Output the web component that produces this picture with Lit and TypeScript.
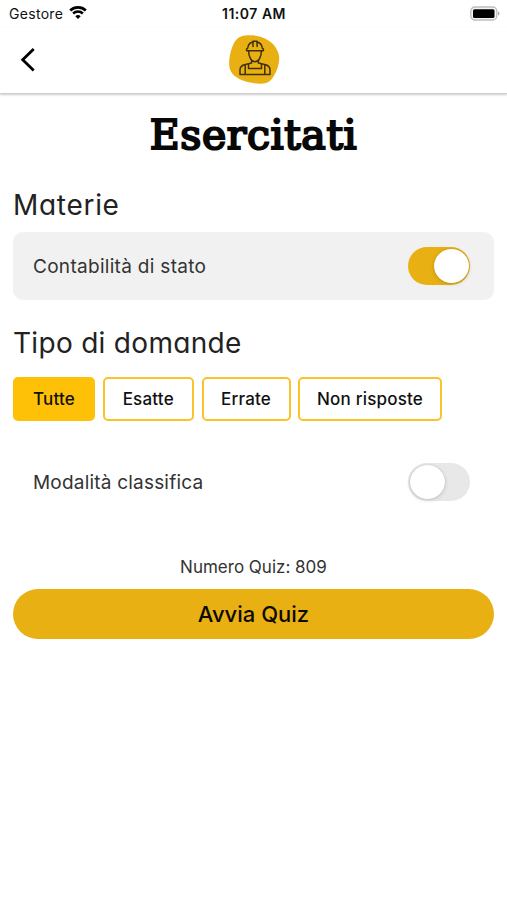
import { LitElement, html, css, svg } from "lit";
import { customElement, property, state } from "lit/decorators.js";
import { classMap } from "lit/directives/class-map.js";

@customElement("quiz-switch")
class QuizSwitch extends LitElement {
  @property({ type: Boolean }) on = false;

  static styles = css`
    :host { display: block; }
    .track {
      display: flex; box-sizing: border-box; width: 62px; height: 38px; padding: 2px 1.500px;
      border-radius: 19px; background: #e8e8e8; justify-content: flex-start;
    }
    .track.on { background: #e9b013; justify-content: flex-end; }
    .knob {
      width: 35px; height: 34px; border-radius: 50%; background: #fff;
      box-shadow: 0 1px 4px rgba(0, 0, 0, 0.16), 0 0 1px rgba(0, 0, 0, 0.2);
    }
  `;

  render() {
    return html`<div class=${classMap({ track: true, on: this.on })} role="switch" aria-checked=${this.on}>
      <div class="knob"></div>
    </div>`;
  }
}

const wifi = svg`
  <path d="M1.200 5.400a11.300 11.300 0 0 1 15.600 0" stroke-width="2.700"/>
  <path d="M4.100 8.500a7.100 7.100 0 0 1 9.800 0" stroke-width="2.500"/>
  <path d="M6.300 11.200a4 4 0 0 1 5.400 0L9 14z" fill="#000" stroke="none"/>`;

const worker = svg`
  <path d="M17 .6C24-.4 31 .6 37 3.500C44 7 49.500 12.500 51 20.500C52 28 49.500 35 45.500 41.500C42.500 46.500 39 48.700 33 48.700C24 48.700 14 46.300 7.500 41.500C2 37.500 .6 32 1.300 25C2 17.500 4.500 9 8.500 4.500C11 2 13.500 1 17 .6Z" fill="#e9b013"/>
  <g fill="none" stroke="#40300a" stroke-width="1.500" stroke-linejoin="round" stroke-linecap="round">
    <path d="M18.600 15.800h16.800v-1.800c-.9-.2-1.200-.7-1.300-1.500c-.4-3.200-2.300-4.900-5-5.500v-.8h-4.200v.8c-2.700.6-4.600 2.300-5 5.500c-.1.800-.4 1.300-1.300 1.500z"/>
    <path d="M25 6.800v4.700M29.100 6.800v4.700"/>
    <path d="M20.600 16c0 5.800 2.800 10.800 6.400 10.800S33.400 21.800 33.400 16"/>
    <path d="M23.600 25.600v2.300l-7.200 1.900c-3 .8-4.400 2.400-4.400 5.200v4.400h30v-4.400c0-2.800-1.400-4.400-4.400-5.200l-7.200-1.900v-2.300"/>
    <path d="M17.200 29.800v9.400M20.500 29v4.500h13V29M36.800 29.800v9.400"/>
  </g>`;

@customElement("app-root")
class AppRoot extends LitElement {
  @state() private selected = "Tutte";
  private types = [
    { label: "Tutte", cls: "t1" },
    { label: "Esatte", cls: "t2" },
    { label: "Errate", cls: "t3" },
    { label: "Non risposte", cls: "t4" },
  ];

  static styles = css`
    :host {
      display: block; height: 900px; background: #fff; color: #222;
      font-family: Inter, "Liberation Sans", sans-serif; overflow: hidden;
    }
    svg { display: block; }
    .status {
      display: grid; grid-template-columns: 1fr auto 1fr; align-items: center;
      height: 27px; padding: 0 7px 0 9px; box-sizing: border-box; color: #111;
      font-size: 14px; line-height: 27px;
    }
    .carrier { display: flex; align-items: center; gap: 6px; letter-spacing: 0.3px; }
    .wifi { margin-top: -3px; }
    .clock { font-weight: 600; font-size: 14px; letter-spacing: 0.5px; margin-right: 1px; }
    .battery { justify-self: end; }
    .nav {
      display: grid; grid-template-columns: 1fr auto 1fr; height: 67px; align-items: start;
      border-bottom: 1px solid #cecece; box-shadow: 0 1px 2px rgba(0, 0, 0, 0.2); box-sizing: border-box;
    }
    .back { margin: 20px 0 0 20px; }
    .logo { margin-top: 8px; }
    main { padding: 0 13px; }
    h1 {
      margin: 13px 0 0; height: 56px; line-height: 56px; text-align: center; color: #080808;
      font-family: "DejaVu Serif", serif; font-size: 41px; font-weight: 400; letter-spacing: 0.6px;
      -webkit-text-stroke: 2.200px #080808; white-space: nowrap;
    }
    h2 {
      margin: 0; height: 36px; line-height: 36px; font-size: 28px; font-weight: 400;
      font-feature-settings: "cv11"; color: #222; letter-spacing: 0.7px;
    }
    .subjects { margin-top: 24px; }
    .kinds { margin-top: 25px; letter-spacing: 0.3px; }
    .row {
      display: flex; align-items: center; justify-content: space-between; height: 68px;
      padding: 0 24px 0 20px; box-sizing: border-box; border-radius: 10px;
      font-size: 19px; letter-spacing: 0.3px; color: #333;
    }
    .grey { background: #f1f1f1; margin-top: 9px; }
    .tabs { display: flex; gap: 7.500px; margin-top: 16px; }
    .tab {
      height: 44px; box-sizing: border-box; border: 2px solid #fbc32a; border-radius: 5px;
      display: flex; align-items: center; justify-content: center; color: #111;
      font-size: 17px; font-weight: 500; letter-spacing: 0.2px; white-space: nowrap;
    }
    .tab.active { background: #ffc107; border-color: #ffc107; }
    .t1 { width: 82px; }
    .t2 { width: 91.500px; }
    .t3 { width: 89px; }
    .t4 { width: 144px; }
    .ranking { margin-top: 27px; letter-spacing: 0.2px; }
    .count { margin-top: 40px; height: 22px; line-height: 22px; text-align: center; font-size: 17px; letter-spacing: 0; color: #333; }
    .start {
      margin-top: 11px; height: 50px; border-radius: 25px; background: #e9b013; color: #0c0a03;
      display: flex; align-items: center; justify-content: center;
      font-size: 22px; font-weight: 500; letter-spacing: 0;
    }
  `;

  render() {
    return html`
      <div class="status">
        <div class="carrier"><span>Gestore</span>
          <svg class="wifi" width="18" height="15" viewBox="0 0 18 15" fill="none" stroke="#000">${wifi}</svg>
        </div>
        <div class="clock">11:07 AM</div>
        <svg class="battery" width="30" height="15" viewBox="0 0 30 15">
          <rect x=".8" y="1" width="26" height="13" rx="4" fill="#f4f4f4" stroke="#bdbdbd" stroke-width="1.300"/>
          <rect x="3" y="3.200" width="21.500" height="8.800" rx="1.500" fill="#000"/>
          <path d="M28 5.500c2 .5 2 3.500 0 4z" fill="#aaa"/>
        </svg>
      </div>
      <div class="nav">
        <svg class="back" width="18" height="26" viewBox="0 0 18 26" fill="none" stroke="#000" stroke-width="2.800">
          <path d="M13.700 1.900L2.700 12.700L13.700 23.500"/>
        </svg>
        <svg class="logo" width="52" height="50" viewBox="0 0 52 50">${worker}</svg>
      </div>
      <main>
        <h1>Esercitati</h1>
        <h2 class="subjects">Materie</h2>
        <div class="row grey"><span>Contabilità di stato</span><quiz-switch on></quiz-switch></div>
        <h2 class="kinds">Tipo di domande</h2>
        <div class="tabs">
          ${this.types.map(
            (t) => html`<div
              class=${classMap({ tab: true, [t.cls]: true, active: t.label === this.selected })}
              @click=${() => (this.selected = t.label)}
            >${t.label}</div>`
          )}
        </div>
        <div class="row ranking"><span>Modalità classifica</span><quiz-switch></quiz-switch></div>
        <div class="count">Numero Quiz: 809</div>
        <div class="start">Avvia Quiz</div>
      </main>
    `;
  }
}
